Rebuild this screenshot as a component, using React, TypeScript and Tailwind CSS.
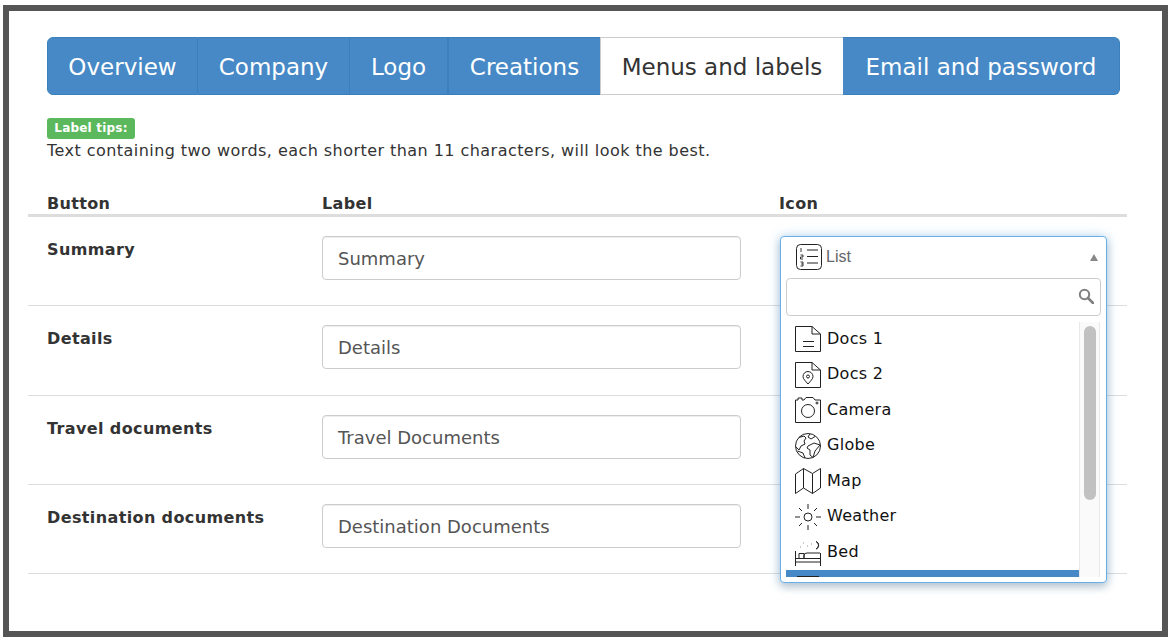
const font = 'font-["DejaVu_Sans",Verdana,sans-serif]';

const tabs = [
  { label: 'Overview', cls: 'w-[151px] border-l rounded-l-[6px] border-r' },
  { label: 'Company', cls: 'w-[152px] border-r' },
  { label: 'Logo', cls: 'w-[98px] border-r' },
  { label: 'Creations', cls: 'w-[152px] border-l' },
  { label: 'Menus and labels', cls: 'w-[243px]', active: true },
  { label: 'Email and password', cls: 'w-[277px] border-r rounded-r-[6px]' },
];

const rows = [
  { button: 'Summary', label: 'Summary' },
  { button: 'Details', label: 'Details' },
  { button: 'Travel documents', label: 'Travel Documents' },
  { button: 'Destination documents', label: 'Destination Documents' },
];

function Ico({ children }: { children: React.ReactNode }) {
  return (
    <svg viewBox="0 0 26 26" className="w-[26px] h-[26px] shrink-0" fill="none" stroke="#222" strokeWidth="1">
      {children}
    </svg>
  );
}

const options: { name: string; icon: React.ReactNode }[] = [
  {
    name: 'Docs 1',
    icon: (
      <>
        <path d="M0.5 0.5H17L25.5 8V25.5H0.5Z" />
        <path d="M17 0.5V8H25.5M8 15.5H19M8 20.5H19" />
      </>
    ),
  },
  {
    name: 'Docs 2',
    icon: (
      <>
        <path d="M0.5 0.5H17L25.5 8V25.5H0.5Z" />
        <path d="M17 0.5V8H25.5" />
        <path d="M13 22C10.5 19 8 17 8 14.5A5 5 0 0 1 18 14.5C18 17 15.5 19 13 22Z" />
        <circle cx="13" cy="14.5" r="1.5" />
      </>
    ),
  },
  {
    name: 'Camera',
    icon: (
      <>
        <path d="M0.5 25.5V3H3V1H7V3H9L11 0.5H18L20 3H25.5V25.5Z" />
        <circle cx="13" cy="14" r="6.5" />
        <circle cx="22" cy="6" r="1" />
      </>
    ),
  },
  {
    name: 'Globe',
    icon: (
      <>
        <circle cx="13" cy="13" r="12.5" />
        <path d="M4 4.5L9 3L11 5L9 8L10 11L6 13L4 17L1 14" />
        <path d="M15 0.8L13 4L16 6L20 3.5" />
        <path d="M13 13L19 10L25 12L20 18L18 24.5L15 22L15 17L12 15Z" />
        <path d="M2.5 18L8 20L10 25" />
      </>
    ),
  },
  {
    name: 'Map',
    icon: (
      <>
        <path d="M0.5 6L8.5 0.5L17.5 5.5L25.5 0.5V20L17.5 25.5L8.5 20L0.5 25.5Z" />
        <path d="M8.5 0.5V20M17.5 5.5V25.5" />
      </>
    ),
  },
  {
    name: 'Weather',
    icon: (
      <>
        <circle cx="13" cy="13" r="4" />
        <path d="M13 0V5M13 21V26M0 13H5M21 13H26M4 4L7 7M19 19L22 22M4 22L7 19M19 7L22 4" />
      </>
    ),
  },
  {
    name: 'Bed',
    icon: (
      <>
        <path d="M0.5 26V11M25.5 26V13M0.5 22H25.5M0.5 18.5H25.5M4 18V13.5H9V18M9 18V15.5Q9 13 12 13H25" />
        <path d="M21 1.5A4 4 0 0 1 21 9A4 4 0 0 0 21 1.5ZM8 3H8.5M12 6H12.5M16 4H16.5M5 7H5.5" />
      </>
    ),
  },
];

function Dropdown() {
  return (
    <div className="absolute left-0 top-0 w-[327px] h-[347px] bg-white border border-[#66afe9] rounded-[4px] shadow-[0_0_12px_rgba(102,175,233,0.45),0_4px_8px_rgba(0,0,0,0.2)] z-10 overflow-hidden">
      <div className="flex items-center h-[41px] pb-[1px] pl-[15px] pr-[8px]">
        <svg viewBox="0 0 26 26" className="w-[26px] h-[26px] shrink-0" fill="none" stroke="#222" strokeWidth="1">
          <rect x="0.5" y="0.5" width="25" height="25" rx="4" />
          <path d="M11 6H22M11 12.5H22M11 19H22" />
          <path d="M5 4V8M4.5 11H7V13H4.5V15H7M4.5 18H7V22H4.5M5 20H7" strokeWidth="0.9" />
        </svg>
        <span className="ml-[4px] text-[16px] leading-none text-[#666] font-['Liberation_Sans',Arial,sans-serif]">List</span>
        <span className="ml-auto w-0 h-0 border-x-[4px] border-x-transparent border-b-[7px] border-b-[#888]" />
      </div>
      <div className="mx-[5px] h-[38px] border border-[#ccc] rounded-[4px] flex items-center justify-end pr-[6px]">
        <svg viewBox="0 0 16 16" className="w-[16px] h-[16px] -mt-[3px]" fill="none" stroke="#808080" strokeWidth="2">
          <circle cx="6.5" cy="6.5" r="4.7" />
          <path d="M10 10L15 15" strokeWidth="2.6" strokeLinecap="round" />
        </svg>
      </div>
      <div className="mt-[6px] flex h-[255px] overflow-hidden">
        <div className="w-[293px] ml-[5px] shrink-0 overflow-hidden">
          <div className="h-[248px] pt-[4px]">
            {options.map((o) => (
              <div key={o.name} className="flex h-[35.6px] pl-[9px]">
                <Ico>{o.icon}</Ico>
                <span className="ml-[6px] pt-[1.5px] text-[16px] leading-[22px] text-[#111] tracking-[0.3px]">{o.name}</span>
              </div>
            ))}
          </div>
          <div className="h-[7px] bg-[#4689c6] pt-[6px] pl-[11px]">
            <div className="w-[22px] h-px bg-[#222]" />
          </div>
        </div>
        <div className="w-[21px] bg-[#fafafa] border-x border-[#e8e8e8] flex justify-center pt-[4px]">
          <div className="w-[12px] h-[174px] rounded-[6px] bg-[#c1c1c1]" />
        </div>
      </div>
    </div>
  );
}

export default function App() {
  return (
    <div className={`w-[1174px] h-[644px] bg-white pl-[3px] pt-[5px] overflow-hidden ${font}`}>
      <div className="w-[1165px] h-[632px] border-[6px] border-[#555] pt-[26px] pl-[19px] bg-white">
        <div className="ml-[19px] w-[1073px] h-[58px] flex">
          {tabs.map((t) => (
            <div
              key={t.label}
              className={`${t.cls} shrink-0 flex items-center justify-center pt-[2px] text-[23px] leading-none ${
                t.active
                  ? 'bg-white text-[#333] border border-r-0 border-[#ccc]'
                  : 'bg-[#4689c6] text-white border-y border-[#3a80bb]'
              }`}
            >
              {t.label}
            </div>
          ))}
        </div>

        <div className="ml-[19px] mt-[23px]">
          <span className="block w-[88px] h-[21px] bg-[#5cb85c] rounded-[3px] text-white text-[12px] font-bold leading-[21px] text-center tracking-[0.2px]">
            Label tips:
          </span>
          <p className="mt-[1px] text-[16px] leading-[22px] text-[#333] tracking-[0.45px]">
            Text containing two words, each shorter than 11 characters, will look the best.
          </p>
        </div>

        <div className="w-[1099px] mt-[31px]">
          <div className="grid grid-cols-[294px_457px_348px] h-[24px] border-b-[3px] border-[#ddd] text-[16px] font-bold text-[#333] leading-[22px] tracking-[0.35px] items-start">
            <span className="pl-[19px]">Button</span>
            <span>Label</span>
            <span>Icon</span>
          </div>
          {rows.map((r, i) => (
            <div key={r.button} className="grid grid-cols-[294px_457px_348px] h-[89.25px] border-b border-[#ddd]">
              <span className="pl-[19px] pt-[22px] text-[16px] font-bold leading-[22px] text-[#333] tracking-[0.38px]">{r.button}</span>
              <div className="pt-[19px]">
                <div className="w-[419px] h-[44px] border border-[#ccc] rounded-[4px] pl-[15px] pt-[1px] flex items-center text-[18px] text-[#555] shadow-[inset_0_1px_1px_rgba(0,0,0,0.075)]">
                  {r.label}
                </div>
              </div>
              <div className="relative">
                {i === 0 && (
                  <div className="absolute left-[1px] top-[19px]">
                    <Dropdown />
                  </div>
                )}
              </div>
            </div>
          ))}
        </div>
      </div>
    </div>
  );
}
